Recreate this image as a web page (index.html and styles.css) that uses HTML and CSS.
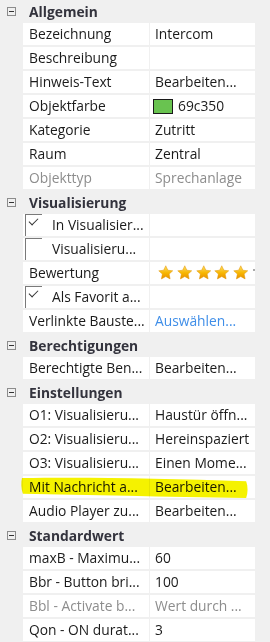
FILE: index.html
```html
<!DOCTYPE html>
<html>
<head>
<meta charset="utf-8">
<link rel="stylesheet" href="styles.css">
</head>
<body>
<svg class="defs" width="0" height="0"><defs><linearGradient id="sg" x1="0" y1="0" x2="0" y2="1"><stop offset="0" stop-color="#ffe066"/><stop offset="0.55" stop-color="#f7b500"/><stop offset="1" stop-color="#e88f00"/></linearGradient></defs></svg>
<div class="grid">
  <div class="cat"><span class="tog"></span><span class="cat-name">Allgemein</span></div>
  <div class="row"><div class="name">Bezeichnung</div><div class="val">Intercom</div></div>
  <div class="row"><div class="name">Beschreibung</div><div class="val"></div></div>
  <div class="row"><div class="name">Hinweis-Text</div><div class="val">Bearbeiten...</div></div>
  <div class="row"><div class="name">Objektfarbe</div><div class="val"><span class="swatch"></span>69c350</div></div>
  <div class="row"><div class="name">Kategorie</div><div class="val">Zutritt</div></div>
  <div class="row"><div class="name">Raum</div><div class="val">Zentral</div></div>
  <div class="row dis"><div class="name">Objekttyp</div><div class="val">Sprechanlage</div></div>

  <div class="cat"><span class="tog"></span><span class="cat-name">Visualisierung</span></div>
  <div class="row"><div class="name chk"><span class="box on"></span>In Visualisier...</div><div class="val"></div></div>
  <div class="row"><div class="name chk"><span class="box"></span>Visualisieru...</div><div class="val"></div></div>
  <div class="row"><div class="name">Bewertung</div><div class="val stars">
    <svg class="star" viewBox="0 0 16 16"><path d="M8 .8l2.2 4.6 5 .6-3.7 3.4 1 5-4.5-2.5-4.5 2.5 1-5L.8 6l5-.6z"/></svg>
    <svg class="star" viewBox="0 0 16 16"><path d="M8 .8l2.2 4.6 5 .6-3.7 3.4 1 5-4.5-2.5-4.5 2.5 1-5L.8 6l5-.6z"/></svg>
    <svg class="star" viewBox="0 0 16 16"><path d="M8 .8l2.2 4.6 5 .6-3.7 3.4 1 5-4.5-2.5-4.5 2.5 1-5L.8 6l5-.6z"/></svg>
    <svg class="star" viewBox="0 0 16 16"><path d="M8 .8l2.2 4.6 5 .6-3.7 3.4 1 5-4.5-2.5-4.5 2.5 1-5L.8 6l5-.6z"/></svg>
    <svg class="star" viewBox="0 0 16 16"><path d="M8 .8l2.2 4.6 5 .6-3.7 3.4 1 5-4.5-2.5-4.5 2.5 1-5L.8 6l5-.6z"/></svg>
    <span class="dot"></span>
  </div></div>
  <div class="row"><div class="name chk"><span class="box on"></span>Als Favorit a...</div><div class="val"></div></div>
  <div class="row"><div class="name">Verlinkte Bauste...</div><div class="val link">Auswählen...</div></div>

  <div class="cat"><span class="tog"></span><span class="cat-name">Berechtigungen</span></div>
  <div class="row"><div class="name">Berechtigte Ben...</div><div class="val">Bearbeiten...</div></div>

  <div class="cat"><span class="tog"></span><span class="cat-name">Einstellungen</span></div>
  <div class="row"><div class="name">O1: Visualisieru...</div><div class="val">Haustür öffn...</div></div>
  <div class="row"><div class="name">O2: Visualisieru...</div><div class="val">Hereinspaziert</div></div>
  <div class="row"><div class="name">O3: Visualisieru...</div><div class="val">Einen Mome...</div></div>
  <div class="row marked"><div class="name">Mit Nachricht a...</div><div class="val">Bearbeiten...</div>
    <svg class="marker" viewBox="0 0 240 20" preserveAspectRatio="none"><path d="M1 1 C60 0 150 1 237 4 C239 9 239 15 237 20 C150 19 70 17 2 16 C0 11 0 5 1 1 Z"/></svg>
  </div>
  <div class="row"><div class="name">Audio Player zu...</div><div class="val">Bearbeiten...</div></div>

  <div class="cat"><span class="tog"></span><span class="cat-name">Standardwert</span></div>
  <div class="row"><div class="name">maxB - Maximu...</div><div class="val">60</div></div>
  <div class="row"><div class="name">Bbr - Button bri...</div><div class="val">100</div></div>
  <div class="row dis"><div class="name">Bbl - Activate b...</div><div class="val">Wert durch ...</div></div>
  <div class="row"><div class="name">Qon - ON durat...</div><div class="val">3</div></div>
</div>
</body>
</html>
```
FILE: styles.css
```css
* { box-sizing: border-box; }
html, body { margin: 0; padding: 0; }
body {
  background: #f0f0f0;
  width: 270px;
  height: 642px;
  overflow: hidden;
  font-family: "Open Sans", "Noto Sans", sans-serif;
  font-size: 13.8px;
  color: #1b1b1b;
}
.defs { position: absolute; }
.grid { display: flex; flex-direction: column; }
.cat {
  height: 23px;
  display: flex;
  align-items: center;
}
.tog {
  width: 9px; height: 9px;
  margin-left: 7px;
  border: 1px solid #8c8c8c;
  position: relative;
  flex: none;
}
.tog::after {
  content: "";
  position: absolute;
  left: 1px; right: 1px; top: 3px;
  height: 1px;
  background: #333;
}
.cat-name {
  margin-left: 13px;
  font-weight: 700;
  color: #33333d;
}
.row {
  height: 24px;
  display: grid;
  grid-template-columns: 126px 105px;
  column-gap: 1px;
  padding-left: 23px;
  padding-bottom: 2px;
  position: relative;
}
.name, .val {
  background: #fff;
  white-space: nowrap;
  overflow: hidden;
  display: flex;
  align-items: center;
  line-height: 22px;
}
.name { padding-left: 6px; }
.val { padding-left: 5px; }
.dis .name, .dis .val { color: #8d8d8d; }
.link { color: #3f8ee8; }
.swatch {
  width: 20px; height: 15px;
  background: #69c350;
  border: 1px solid #1a1a1a;
  margin-right: 5px;
  margin-left: -2px;
  flex: none;
}
.chk { padding-left: 2px; }
.box {
  width: 17px; height: 22px;
  border-left: 1px solid #7a7a7a;
  border-top: 1px solid #7a7a7a;
  margin-right: 10px;
  flex: none;
  position: relative;
  align-self: flex-end;
}
.box.on::after {
  content: "";
  position: absolute;
  left: 3px; top: 3px;
  width: 8px; height: 4px;
  border-left: 1.5px solid #333;
  border-bottom: 1.5px solid #333;
  transform: rotate(-45deg);
}
.stars { padding-left: 8px; gap: 3.3px; }
.star { width: 15.5px; height: 15.5px; flex: none; fill: url(#sg); stroke: #e09300; stroke-width: .5; }
.dot { width: 2px; height: 2px; background: #aaa; margin-left: 1px; margin-top: -6px; flex: none; }
.marker {
  position: absolute;
  left: 21px; top: 1px;
  width: 228px; height: 21px;
  fill: #f5f200;
  mix-blend-mode: multiply;
  pointer-events: none;
}
```
